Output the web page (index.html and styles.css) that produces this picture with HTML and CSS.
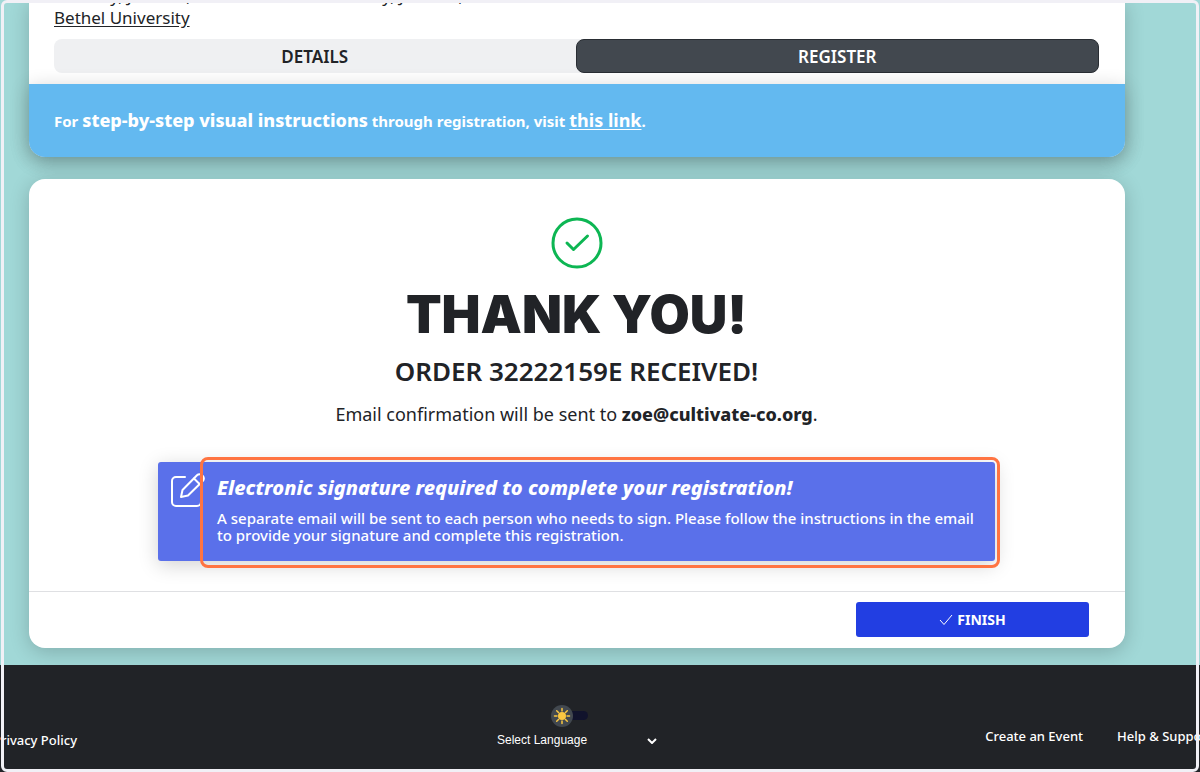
FILE: index.html
```html
<!DOCTYPE html>
<html lang="en">
<head>
<meta charset="utf-8">
<title>Registration - Thank You</title>
<link rel="stylesheet" href="styles.css">
</head>
<body>
<div class="page">
  <main class="content">
    <section class="card event">
      <div class="event-head">
        <p class="event-date">Monday, June 17, 2024 2:00 PM - Thursday, June 20, 2024 10:00 AM</p>
        <a class="event-place" href="#">Bethel University</a>
        <nav class="tabs">
          <button type="button" class="tab">DETAILS</button>
          <button type="button" class="tab tab-active">REGISTER</button>
        </nav>
      </div>
      <p class="banner">For <strong>step-by-step visual instructions</strong> through registration, visit <a href="#">this link</a>.</p>
    </section>

    <section class="card receipt">
      <div class="receipt-body">
        <svg class="success" viewBox="0 0 52 52" aria-hidden="true">
          <circle cx="26" cy="26" r="24"/>
          <path d="M16 26l6.500 6.500 14-13.500"/>
        </svg>
        <h1 class="title">THANK YOU!</h1>
        <h2 class="order">ORDER 32222159E RECEIVED!</h2>
        <p class="email">Email confirmation will be sent to <strong>zoe@cultivate-co.org</strong>.</p>
        <div class="alert">
          <svg class="pen" viewBox="0 0 36 36" aria-hidden="true">
            <path d="M15 4H6a4 4 0 0 0-4 4v21a4 4 0 0 0 4 4h21a4 4 0 0 0 4-4V18"/>
            <path d="M11 24l1.500-7L27 2.200a3.500 3.500 0 0 1 5 0l.8.8a3.500 3.500 0 0 1 0 5L18 22.500z"/>
            <path d="M24 5.500l5.500 5.500"/>
          </svg>
          <div class="alert-text">
            <h3 class="alert-title">Electronic signature required to complete your registration!</h3>
            <p class="alert-note">A separate email will be sent to each person who needs to sign. Please follow the instructions in the email to provide your signature and complete this registration.</p>
          </div>
          <span class="highlight"></span>
        </div>
      </div>
      <div class="receipt-foot">
        <button type="button" class="finish">
          <svg class="tick" viewBox="0 0 14 12" aria-hidden="true"><path d="M1 6l4 4.500L13 1"/></svg>
          FINISH
        </button>
      </div>
    </section>
  </main>

  <footer class="footer">
    <a class="foot-link foot-left" href="#">Privacy Policy</a>
    <div class="foot-tools">
      <button type="button" class="theme" aria-label="Light theme">
        <svg class="sun" viewBox="0 0 37 22" aria-hidden="true">
          <rect class="sun-track" x="6" y="6" width="31" height="9" rx="4.500"/>
          <circle class="sun-disc" cx="11" cy="11" r="11"/>
          <circle class="sun-core" cx="11" cy="11" r="4"/>
          <path class="sun-rays" d="M11 3.500v2.500M11 16v2.500M3.500 11H6M16 11h2.500M5.700 5.700l1.800 1.800M14.500 14.500l1.800 1.800M16.300 5.700l-1.800 1.800M7.500 14.500l-1.800 1.800"/>
        </svg>
      </button>
      <div class="language">
        <select class="language-select" aria-label="Select Language"><option>Select Language</option></select>
        <svg class="chevron" viewBox="0 0 10 6" aria-hidden="true"><path d="M1 1l4 4 4-4"/></svg>
      </div>
    </div>
    <div class="foot-right">
      <a class="foot-link" href="#">Create an Event</a>
      <a class="foot-link" href="#">Help &amp; Support</a>
    </div>
  </footer>
</div>
</body>
</html>
```
FILE: styles.css
```css
* { box-sizing: border-box; }

body {
  margin: 0;
  background: #a1d8d7;
  color: #212327;
  font-family: "Noto Sans", "Open Sans", sans-serif;
  font-size: 17px;
}

h1, h2, h3, p { margin: 0; }
button { font: inherit; border: 0; padding: 0; cursor: pointer; }

.page {
  position: relative;
  display: flex;
  flex-direction: column;
  min-height: 100vh;
  overflow: hidden;
}

.page::after {
  content: "";
  position: absolute;
  inset: 0 1px;
  border: 3px solid #f1f0f6;
  border-radius: 6px;
  pointer-events: none;
}

.content {
  display: flex;
  flex-direction: column;
  gap: 22px;
  padding: 0 75px 17px 29px;
}

.card {
  background: #fff;
  border-radius: 16px;
  box-shadow: 0 4px 20px rgba(0, 0, 0, 0.2);
}

.event { border-radius: 0 0 16px 16px; }

.event-head {
  margin-top: -15px;
  padding: 0 26px 11px 25px;
}

.event-date,
.event-place {
  display: block;
  line-height: 22px;
}

.event-place {
  color: inherit;
  text-underline-offset: 2px;
  margin-bottom: 10px;
}

.tabs {
  display: flex;
  background: #eff0f2;
  border-radius: 8px;
}

.tab {
  flex: 1;
  height: 34px;
  border-radius: 8px;
  background: transparent;
  color: #212327;
  font-weight: 600;
}

.tab-active {
  background: #42484f;
  border: 1px solid #292d33;
  color: #fff;
}

.banner {
  padding: 24px 25px;
  border-radius: 0 0 16px 16px;
  background: #63b9f0;
  box-shadow: 0 4px 20px rgba(0, 0, 0, 0.2);
  color: #fff;
  font-size: 15px;
  font-weight: 700;
  line-height: 24px;
}

.banner strong { font-size: 18px; font-weight: 800; }
.banner a { color: inherit; font-size: 18px; font-weight: 700; text-underline-offset: 2px; }

.receipt-body {
  display: flex;
  flex-direction: column;
  align-items: center;
  padding: 38px 130px 30px 129px;
  text-align: center;
}

.success {
  width: 52px;
  height: 52px;
  fill: none;
  stroke: #0db653;
  stroke-width: 3;
  stroke-linecap: round;
  stroke-linejoin: round;
}

.title {
  margin-top: 16px;
  font-family: Inter, "Noto Sans", sans-serif;
  font-size: 52px;
  font-weight: 900;
  line-height: 60px;
}

.order {
  margin-top: 10px;
  font-size: 26px;
  font-weight: 600;
  line-height: 32px;
}

.email { margin-top: 15px; font-size: 18px; line-height: 24px; }
.email strong { font-weight: 800; }

.alert {
  position: relative;
  display: flex;
  gap: 11px;
  width: 100%;
  margin-top: 36px;
  padding: 11px 16px 17px 12px;
  border-radius: 3px;
  background: #5a70ea;
  box-shadow: 0 4px 20px rgba(0, 0, 0, 0.18);
  color: #fff;
  text-align: left;
}

.pen {
  flex: none;
  width: 36px;
  height: 36px;
  fill: none;
  stroke: #fff;
  stroke-width: 2;
  stroke-linecap: round;
  stroke-linejoin: round;
}

.alert-title {
  font-size: 20px;
  font-style: italic;
  font-weight: 800;
  line-height: 30px;
}

.alert-note {
  margin-top: 7px;
  font-size: 15px;
  font-weight: 500;
  line-height: 17px;
}

.highlight {
  position: absolute;
  inset: -5px -5px -7px 42px;
  border: 3px solid #ff7442;
  border-radius: 8px;
}

.receipt-foot {
  display: flex;
  justify-content: flex-end;
  padding: 10px 36px 11px;
  border-top: 1px solid #dfe0e3;
}

.finish {
  display: flex;
  align-items: center;
  justify-content: center;
  gap: 4px;
  width: 233px;
  height: 35px;
  border-radius: 3px;
  background: #223ee2;
  color: #fff;
  font-size: 14px;
  font-weight: 700;
}

.tick {
  width: 14px;
  height: 12px;
  fill: none;
  stroke: #fff;
}

.footer {
  flex: 1;
  display: grid;
  grid-template-columns: 1fr 160px 1fr;
  padding-top: 40px;
  background: #212327;
  color: #fff;
}

.foot-link {
  color: inherit;
  font-size: 13px;
  font-weight: 500;
  line-height: 18px;
  text-decoration: none;
  white-space: nowrap;
}

.foot-left { margin: 26px 0 0 -7px; }

.foot-tools {
  display: flex;
  flex-direction: column;
  width: 160px;
  margin-left: -23px;
}

.theme {
  display: flex;
  align-self: center;
  margin-right: 16px;
  background: transparent;
}

.sun { width: 37px; height: 22px; }
.sun-track { fill: #11132c; }
.sun-disc { fill: #42484f; }
.sun-core { fill: #fbc741; }
.sun-rays { stroke: #fbc741; stroke-width: 1.500; stroke-linecap: round; }

.language { position: relative; margin-top: 4px; }

.language-select {
  appearance: none;
  display: block;
  width: 100%;
  height: 18px;
  padding: 0;
  border: 0;
  background: transparent;
  color: #fff;
  font: 12px "Liberation Sans", sans-serif;
}

.chevron {
  position: absolute;
  top: 7px;
  right: 0;
  width: 10px;
  height: 6px;
  fill: none;
  stroke: #fff;
  stroke-width: 2;
  pointer-events: none;
}

.foot-right {
  display: flex;
  justify-content: flex-end;
  gap: 34px;
  margin: 22px -12px 0 0;
}
```
